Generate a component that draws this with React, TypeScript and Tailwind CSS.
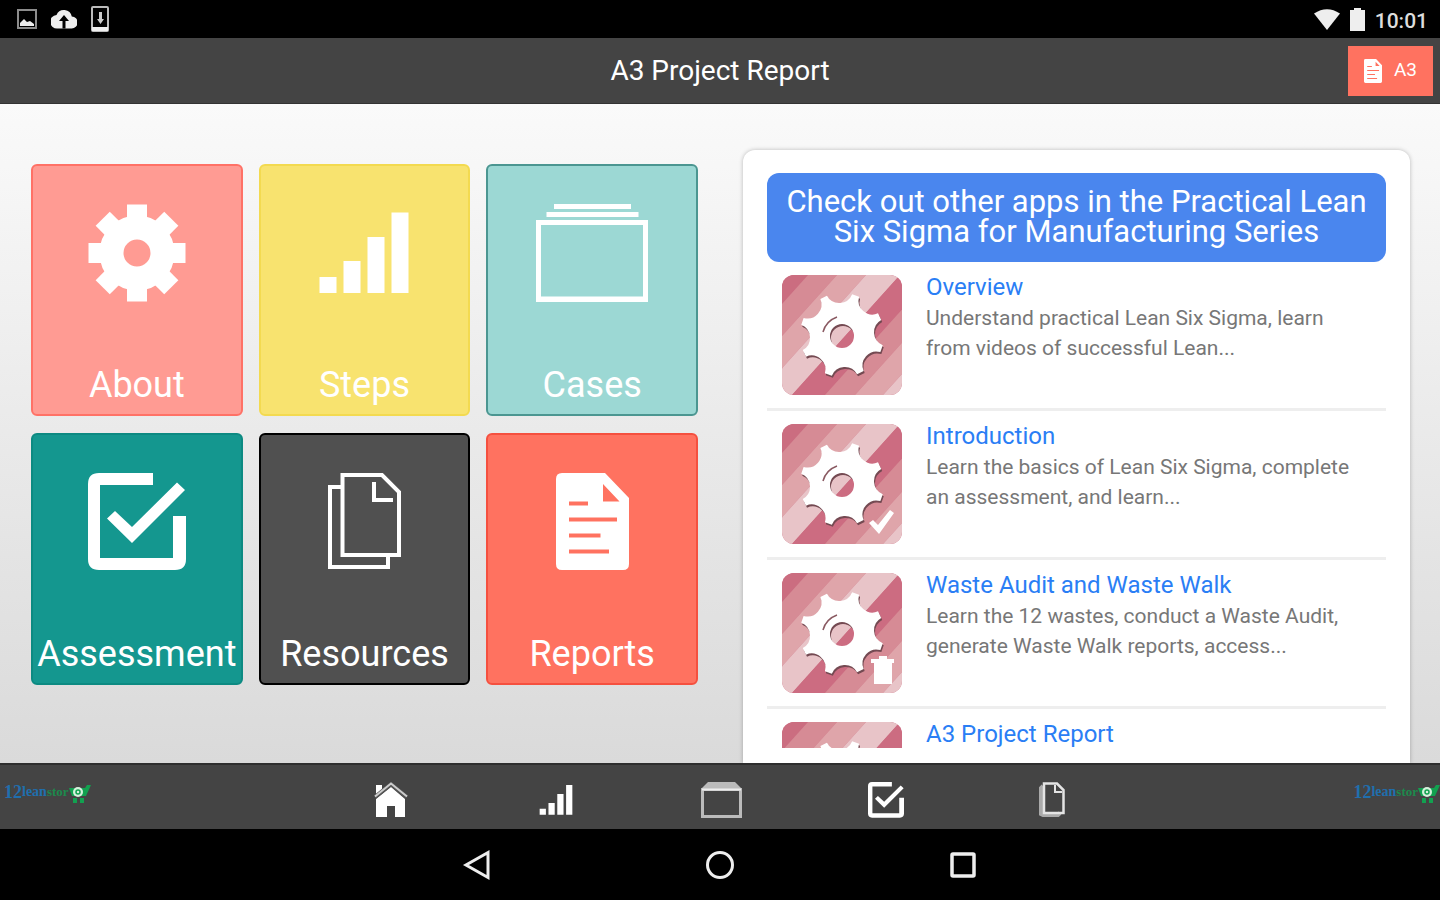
import React from 'react';

type IconProps = { className?: string };

const GearIcon: React.FC<IconProps> = ({ className }) => (
  <svg className={className} viewBox="-49 -49 98 98" fill="currentColor" aria-hidden="true">
    <circle r="25.5" fill="none" stroke="currentColor" strokeWidth="24" />
    {[0, 45, 90, 135, 180, 225, 270, 315].map((angle) => (
      <rect key={angle} x="-10" y="-48.5" width="20" height="20" transform={`rotate(${angle})`} />
    ))}
  </svg>
);

const BarsIcon: React.FC<IconProps> = ({ className }) => (
  <svg className={className} viewBox="0 0 98 98" fill="currentColor" aria-hidden="true">
    <path d="M4.500 73h17v16h-17zM28.500 57h17v32h-17zM52.500 33h17v56h-17zM76.500 8.500h17v80.500h-17z" />
  </svg>
);

const StackIcon: React.FC<IconProps> = ({ className }) => (
  <svg className={className} viewBox="0 0 112 98" fill="currentColor" aria-hidden="true">
    <path fillRule="evenodd" d="M18 0h77v5H18zM10.500 8h92v5h-92zM0 16h112v82H0zM5 21v71.500h102V21z" />
  </svg>
);

const CheckboxIcon: React.FC<IconProps> = ({ className }) => (
  <svg className={className} viewBox="0 0 98 98" fill="currentColor" aria-hidden="true">
    <path d="M11 0H65V12H12V85H85V43H98V86Q98 97 87 97H11Q0 97 0 86V11Q0 0 11 0Z" />
    <path d="M19 45.500L27 38L44 54L89 9.500L97 17L44 70Z" />
  </svg>
);

const CopyIcon: React.FC<IconProps> = ({ className }) => (
  <svg className={className} viewBox="0 0 73 97" fill="none" stroke="currentColor" strokeWidth="4" aria-hidden="true">
    <path d="M14.500 2H54L71 19V82H14.500Z" />
    <path d="M46 9V27H65" />
    <path d="M14 14H2V94H60V83" />
  </svg>
);

const DocumentIcon: React.FC<IconProps> = ({ className }) => (
  <svg className={className} viewBox="0 0 73 97" fill="currentColor" aria-hidden="true">
    <path
      fillRule="evenodd"
      d="M6 0H49L73 25V91Q73 97 67 97H6Q0 97 0 91V6Q0 0 6 0ZM47 11V28.500H63.500ZM13 28.500V32.500H32V28.500ZM13 44.500V48.500H61V44.500ZM13 60.500V64.500H44.500V60.500ZM13 76.500V80.500H53V76.500Z"
    />
  </svg>
);

const HomeIcon: React.FC<IconProps> = ({ className }) => (
  <svg className={className} viewBox="0 0 34 36" fill="currentColor" aria-hidden="true">
    <path d="M2 3H8V8L2 13Z" />
    <path d="M17 5L31 17V35H21V24H13V35H2V17Z" />
    <path d="M1 15L17 2L33 15" fill="none" stroke="#555" strokeWidth="4" />
    <path d="M1 14.500L17 1.500L33 14.500" fill="none" stroke="#ccc" strokeWidth="2" />
  </svg>
);

// heavier versions for the tab bar, where the thin outlines would be lost
const SmallStackIcon: React.FC<IconProps> = ({ className }) => (
  <svg className={className} viewBox="0 0 41 36" aria-hidden="true">
    <path d="M7 0H34L40 6V9H1V6Z" fill="#bbb" />
    <rect x="1.5" y="7.5" width="38" height="27" fill="none" stroke="#bbb" strokeWidth="3" />
    <path d="M1 7.500H40" stroke="#eee" strokeWidth="2" />
  </svg>
);

const SmallCopyIcon: React.FC<IconProps> = ({ className }) => (
  <svg className={className} viewBox="0 0 27 36" fill="none" aria-hidden="true">
    <path d="M5 4L3 6V32L5 33H20L22 31" stroke="#aaa" strokeWidth="4" />
    <path d="M6 1.500H19L25.500 8V31H6Z" stroke="#e4e4e4" strokeWidth="2.5" />
    <path d="M17 3V10H24" stroke="#e4e4e4" strokeWidth="2" />
  </svg>
);

const PictureIcon: React.FC<IconProps> = ({ className }) => (
  <svg className={className} viewBox="0 0 20 20" aria-hidden="true">
    <rect x="1" y="1" width="18" height="18" fill="none" stroke="#8c8c8c" strokeWidth="2" />
    <path d="M3 17V14L7 10L10 13L13 12L17 15V17Z" fill="#eee" />
  </svg>
);

const CloudUploadIcon: React.FC<IconProps> = ({ className }) => (
  <svg className={className} viewBox="0 0 26 20" fill="#eee" aria-hidden="true">
    <path d="M20.800 7.500A8 8 0 0 0 5.500 6A6.500 6.500 0 0 0 6.500 19.500H20.500A6 6 0 0 0 20.800 7.500Z" />
    <path d="M13 6L18 12H14.500V19.500H11.500V12H8Z" fill="#000" />
  </svg>
);

const PhoneIcon: React.FC<IconProps> = ({ className }) => (
  <svg className={className} viewBox="0 0 18 26" aria-hidden="true">
    <rect x="1" y="1" width="16" height="24" rx="1" fill="none" stroke="#bbb" strokeWidth="2" />
    <path d="M1 21H17V25H1Z" fill="#eee" />
    <path d="M8 6H11V13H13L9.500 18L6 13H8Z" fill="#ccc" />
  </svg>
);

const WifiIcon: React.FC<IconProps> = ({ className }) => (
  <svg className={className} viewBox="0 0 26 21" fill="#eee" aria-hidden="true">
    <path d="M13 21L0 4.500Q13 -4 26 4.500Z" />
  </svg>
);

const BatteryIcon: React.FC<IconProps> = ({ className }) => (
  <svg className={className} viewBox="0 0 15 23" fill="#eee" aria-hidden="true">
    <path d="M4 0H11V2H15V23H0V2H4Z" />
  </svg>
);

// cog with eight pointed teeth joined by concave arcs
const cogPath = () => {
  const point = (deg: number) => {
    const rad = (deg * Math.PI) / 180;
    return `${(60 + 42 * Math.cos(rad)).toFixed(2)} ${(60 + 42 * Math.sin(rad)).toFixed(2)}`;
  };
  let d = `M${point(14)}`;
  for (let i = 0; i < 8; i++) {
    const tooth = 19 + i * 45;
    d += `L${point(tooth + 5)}A14 14 0 0 0 ${point(tooth + 40)}`;
  }
  return `${d}ZM72 61A12 12 0 1 0 48 61A12 12 0 1 0 72 61Z`;
};
const COG = cogPath();

const STRIPES = [
  { from: -10, to: 26, color: '#cb6d80' },
  { from: 26, to: 55, color: '#d68b95' },
  { from: 55, to: 84, color: '#dfa5aa' },
  { from: 84, to: 118, color: '#e8c4c8' },
  { from: 118, to: 151, color: '#cc6c81' },
  { from: 151, to: 181, color: '#d68b95' },
  { from: 181, to: 209, color: '#dfa5aa' },
  { from: 209, to: 240, color: '#e8c4c8' },
];

const AppThumb: React.FC<{ badge?: 'check' | 'trash' }> = ({ badge }) => (
  <svg className="my-[13px] size-[120px] shrink-0 rounded-xl" viewBox="0 0 120 120" aria-hidden="true">
    <rect width="120" height="120" fill="#cb6d80" />
    {STRIPES.map(({ from, to, color }) => (
      <path key={from} d={`M${from} 0H${to}L${to - 108} 120H${from - 108}Z`} fill={color} />
    ))}
    <path d={COG} fill="#744a52" fillRule="evenodd" transform="translate(1 2)" />
    <path d={COG} fill="#fff" fillRule="evenodd" />
    <path d="M41 57Q44 46 55 42" fill="none" stroke="#8a5a62" strokeWidth="1.5" />
    {badge === 'check' && <path d="M87 99L91 96L96 101L108 86L112 89L97 110Z" fill="#fff" />}
    {badge === 'trash' && <path d="M89 86H97V83H105V86H112V90H110V111H92V90H89Z" fill="#fff" />}
  </svg>
);

const StoreLogo: React.FC = () => (
  <a href="#store" aria-label="12leanstore" className="flex h-4 items-end font-['Liberation_Serif',serif] font-bold">
    <span className="text-[18px] leading-4 text-[#1f6fae]">12</span>
    <span className="text-[14px] leading-4 text-[#1f6fae]">lean</span>
    <span className="text-[13px] leading-4 text-[#1c8a4c]">stor</span>
    <svg className="-mb-1 h-5 w-[22px]" viewBox="0 0 22 20" aria-hidden="true">
      <path d="M0 4H16L18 1H22L17 12H3Z" fill="#12a150" />
      <circle cx="9" cy="8" r="5" fill="#d6f0dc" />
      <circle cx="9" cy="8" r="2" fill="none" stroke="#12a150" strokeWidth="1.5" />
      <path d="M4 14H8V19H4ZM11 14H15V19H11Z" fill="#12a150" />
    </svg>
  </a>
);

const TILES = [
  { label: 'About', color: 'bg-[#ff9b93] border-[#ff7166]', icon: <GearIcon className="size-[98px]" /> },
  { label: 'Steps', color: 'bg-[#f8e36f] border-[#f3da50]', icon: <BarsIcon className="size-[98px]" /> },
  { label: 'Cases', color: 'bg-[#9cd8d4] border-[#4b9691]', icon: <StackIcon className="h-[98px] w-28" /> },
  { label: 'Assessment', color: 'bg-[#14978f] border-[#0c8a82]', icon: <CheckboxIcon className="size-[98px]" /> },
  { label: 'Resources', color: 'bg-[#505050] border-black', icon: <CopyIcon className="h-[97px] w-[73px]" /> },
  { label: 'Reports', color: 'bg-[#ff7260] border-[#f5503f]', icon: <DocumentIcon className="h-[97px] w-[73px]" /> },
];

const APPS: { title: string; text?: string; badge?: 'check' | 'trash' }[] = [
  { title: 'Overview', text: 'Understand practical Lean Six Sigma, learn from videos of successful Lean...' },
  { title: 'Introduction', text: 'Learn the basics of Lean Six Sigma, complete an assessment, and learn...', badge: 'check' },
  { title: 'Waste Audit and Waste Walk', text: 'Learn the 12 wastes, conduct a Waste Audit, generate Waste Walk reports, access...', badge: 'trash' },
  { title: 'A3 Project Report' },
];

const TABS = [
  { label: 'Home', icon: <HomeIcon className="h-9 w-[34px] text-white" /> },
  { label: 'Steps', icon: <BarsIcon className="size-9 text-white" /> },
  { label: 'Cases', icon: <SmallStackIcon className="h-9 w-[41px]" /> },
  { label: 'Assessment', icon: <CheckboxIcon className="size-9 text-white" /> },
  { label: 'Resources', icon: <SmallCopyIcon className="h-9 w-[27px]" /> },
];

const App: React.FC = () => {
  return (
    <div className="flex h-screen flex-col overflow-hidden bg-black font-[Roboto,sans-serif]">
      <div className="flex h-[38px] shrink-0 items-center justify-between pr-3 pl-[17px]">
        <div className="flex items-center gap-3.5">
          <PictureIcon className="size-5" />
          <CloudUploadIcon className="h-5 w-[26px]" />
          <PhoneIcon className="h-[26px] w-[18px]" />
        </div>
        <div className="flex items-center gap-2.5">
          <WifiIcon className="h-[21px] w-[26px]" />
          <BatteryIcon className="h-[23px] w-[15px]" />
          <span className="pt-1 text-[21px] leading-6 font-medium text-[#ddd]">10:01</span>
        </div>
      </div>

      <header className="grid h-[66px] shrink-0 grid-cols-[1fr_auto_1fr] items-center border-b border-[#333] bg-[#444]">
        <h1 className="col-start-2 text-[28px] text-white">A3 Project Report</h1>
        <button className="mr-[7px] flex h-[50px] w-[85px] items-center justify-center gap-3 justify-self-end bg-[#ff7260] text-[19px] text-white">
          <DocumentIcon className="h-6 w-[18px]" />
          A3
        </button>
      </header>

      <main className="grid min-h-0 flex-1 grid-cols-2 gap-[45px] bg-linear-to-b from-[#fafafa] to-[#dadada] pr-[30px] pl-[31px]">
        <div className="grid grid-cols-3 content-start gap-x-4 gap-y-[17px] pt-[60px]">
          {TILES.map(({ label, color, icon }) => (
            <button
              key={label}
              className={`flex h-[252px] flex-col items-center justify-between rounded-md border-2 pt-[38px] pb-2 text-[36px] leading-[42px] text-white ${color}`}
            >
              {icon}
              {label}
            </button>
          ))}
        </div>

        <section className="mt-[46px] flex min-h-0 flex-col rounded-t-xl bg-white px-6 pt-[23px] pb-[15px] shadow-[0_0_4px_rgba(0,0,0,0.25)]">
          <h2 className="shrink-0 rounded-xl bg-[#4a86ee] px-3 pt-[14px] pb-[15px] text-center text-[31px] leading-[30px] text-white">
            Check out other apps in the Practical Lean Six Sigma for Manufacturing Series
          </h2>
          <ul className="min-h-0 flex-1 overflow-hidden">
            {APPS.map(({ title, text, badge }) => (
              <li key={title} className="flex gap-6 border-b-[3px] border-[#eee] px-[15px]">
                <AppThumb badge={badge} />
                <div className="my-[10px] text-[21px] leading-[30px] text-[#777]">
                  <a href="#app" className="text-2xl leading-[30px] text-[#2a7ef5]">
                    {title}
                  </a>
                  {text && <p>{text}</p>}
                </div>
              </li>
            ))}
          </ul>
        </section>
      </main>

      <footer className="flex h-[66px] shrink-0 items-center justify-between border-t-2 border-[#2e2e2e] bg-[#444]">
        <div className="flex flex-1 pb-2.5 pl-1">
          <StoreLogo />
        </div>
        <nav className="flex pt-1.5">
          {TABS.map(({ label, icon }) => (
            <button key={label} aria-label={label} className="flex w-[165px] items-center justify-center">
              {icon}
            </button>
          ))}
        </nav>
        <div className="flex flex-1 justify-end pb-2.5 pl-0.5">
          <StoreLogo />
        </div>
      </footer>

      <div className="flex h-[71px] shrink-0 items-center justify-center">
        <button aria-label="Back" className="flex w-[243px] justify-center">
          <svg className="size-8" viewBox="0 0 32 32" fill="none" stroke="#eee" strokeWidth="3">
            <path d="M27 3.500V28.500L5 16Z" />
          </svg>
        </button>
        <button aria-label="Home" className="flex w-[243px] justify-center">
          <svg className="size-8" viewBox="0 0 32 32" fill="none" stroke="#eee" strokeWidth="3">
            <circle cx="16" cy="16" r="12.5" />
          </svg>
        </button>
        <button aria-label="Recent apps" className="flex w-[243px] justify-center">
          <svg className="size-8" viewBox="0 0 32 32" fill="none" stroke="#eee" strokeWidth="3.5">
            <rect x="5" y="5" width="22" height="22" rx="1" />
          </svg>
        </button>
      </div>
    </div>
  );
};

export default App;
